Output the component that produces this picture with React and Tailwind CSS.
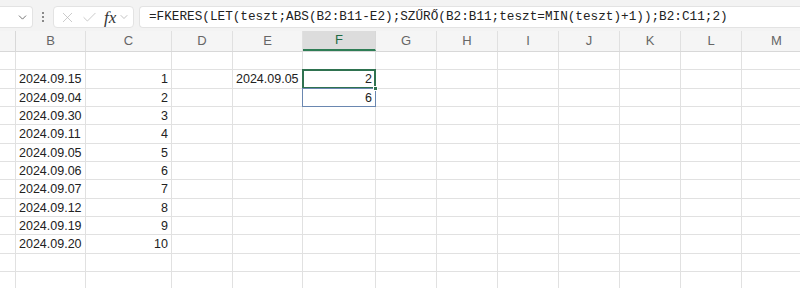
import { ChevronDown, X, Check } from 'lucide-react';

const cols = [
  { k: 'A', w: 16 },
  { k: 'B', w: 70 },
  { k: 'C', w: 86 },
  { k: 'D', w: 61 },
  { k: 'E', w: 70 },
  { k: 'F', w: 73 },
  { k: 'G', w: 61 },
  { k: 'H', w: 61 },
  { k: 'I', w: 61 },
  { k: 'J', w: 61 },
  { k: 'K', w: 61 },
  { k: 'L', w: 61 },
  { k: 'M', w: 70 },
];

const dates = [
  '2024.09.15', '2024.09.04', '2024.09.30', '2024.09.11', '2024.09.05',
  '2024.09.06', '2024.09.07', '2024.09.12', '2024.09.19', '2024.09.20',
];

const formula = '=FKERES(LET(teszt;ABS(B2:B11-E2);SZŰRŐ(B2:B11;teszt=MIN(teszt)+1));B2:C11;2)';

function cellValue(row, col) {
  if (row >= 1 && row <= 10) {
    if (col === 'B') return { text: dates[row - 1], align: 'left' };
    if (col === 'C') return { text: String(row), align: 'right' };
  }
  if (row === 1 && col === 'E') return { text: '2024.09.05', align: 'left' };
  if (row === 1 && col === 'F') return { text: '2', align: 'right' };
  if (row === 2 && col === 'F') return { text: '6', align: 'right' };
  return null;
}

export default function App() {
  const rows = Array.from({ length: 13 }, (_, i) => i);

  return (
    <div className="w-[800px] h-[288px] overflow-hidden bg-white" style={{ fontFamily: '"Liberation Sans", Arial, sans-serif' }}>
      {/* formula bar */}
      <div className="h-[31px] bg-[#f3f3f3] flex items-center pt-[3px]">
        <div className="w-[33px] h-[22px] bg-white rounded-r-[4px] border border-l-0 border-[#e3e3e3] flex items-center justify-end pr-[3px]">
          <ChevronDown size={13} strokeWidth={1.5} className="text-[#555]" />
        </div>
        <div className="w-[20px] flex flex-col items-center gap-[2px]">
          <span className="w-[2px] h-[2px] bg-[#666] rounded-full"></span>
          <span className="w-[2px] h-[2px] bg-[#666] rounded-full"></span>
          <span className="w-[2px] h-[2px] bg-[#666] rounded-full"></span>
        </div>
        <div className="w-[81px] h-[22px] bg-white rounded-[4px] border border-[#e3e3e3] flex items-center pl-[5px]">
          <X size={17} strokeWidth={1} className="text-[#b5b5b5]" />
          <Check size={17} strokeWidth={1} className="text-[#b5b5b5] ml-[5px]" />
          <span className="ml-[6px] text-[17px] italic text-[#333] leading-none" style={{ fontFamily: '"Liberation Serif", serif' }}>fx</span>
          <ChevronDown size={12} strokeWidth={1.2} className="text-[#999] ml-[2px]" />
        </div>
        <div className="ml-[5px] flex-1 h-[22px] bg-white rounded-l-[4px] border border-r-0 border-[#e3e3e3] flex items-center pl-[9px]">
          <span className="text-[12.7px] text-[#222] whitespace-nowrap" style={{ fontFamily: '"Liberation Mono", monospace' }}>{formula}</span>
        </div>
      </div>

      {/* column headers */}
      <div className="flex h-[21px] bg-[#f5f5f5] border-b border-[#d8d8d8]">
        {cols.map((c) => (
          <div
            key={c.k}
            style={{ width: c.w }}
            className={
              c.k === 'F'
                ? 'shrink-0 h-full flex items-center justify-center text-[13px] text-[#1e6b45] bg-[#dcdcdc] border-b-2 border-[#2e7d55] border-r border-r-[#d8d8d8]'
                : c.k === 'A'
                ? 'shrink-0 h-full border-r border-[#d8d8d8]'
                : 'shrink-0 h-full flex items-center justify-center text-[13px] text-[#666] border-r border-[#e0e0e0]'
            }
          >
            {c.k === 'A' ? '' : c.k}
          </div>
        ))}
      </div>

      {/* grid */}
      <div className="flex flex-col">
        {rows.map((r) => (
          <div key={r} className="flex h-[18.33px] shrink-0">
            {cols.map((c) => {
              const v = cellValue(r, c.k);
              const selected = r === 1 && c.k === 'F';
              const spill = r === 2 && c.k === 'F';
              return (
                <div
                  key={c.k}
                  style={{ width: c.w }}
                  className={
                    'shrink-0 h-full relative border-r border-b border-[#e1e1e1] flex items-center text-[12.5px] text-[#222] px-[3px] pt-[1px] leading-none ' +
                    (v && v.align === 'right' ? 'justify-end' : 'justify-start')
                  }
                >
                  {v ? <span className="relative z-10">{v.text}</span> : null}
                  {selected && (
                    <>
                      <div className="absolute -left-[1px] -top-[1px] -right-[1px] -bottom-[1px] border-2 border-[#2f7250] z-20"></div>
                      <div className="absolute -right-[3px] -bottom-[3px] w-[5px] h-[5px] bg-[#2f7250] border border-white z-30"></div>
                    </>
                  )}
                  {spill && (
                    <div className="absolute -left-[1px] -top-[1px] -right-[1px] -bottom-[1px] border border-[#6a87b0] z-20"></div>
                  )}
                </div>
              );
            })}
          </div>
        ))}
      </div>
    </div>
  );
}
